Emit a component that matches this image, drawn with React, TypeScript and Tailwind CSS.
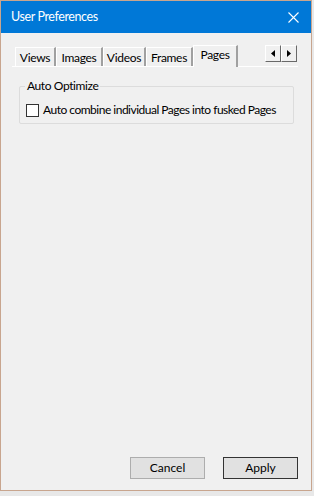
import React from "react";

const font = { fontFamily: 'Lato, "Noto Sans", sans-serif' };

function Tab({ label, selected, w }: { label: string; selected?: boolean; w: string }) {
  if (selected) {
    return (
      <div
        className={`relative ${w} h-[22px] -mb-[1px] bg-[#f0f0f0] border-t border-l border-white border-r-2 border-r-[#a0a0a0] flex items-start justify-center pt-[1px] z-10`}
      >
        <span className="text-[12px] leading-[16px] text-black tracking-[-0.3px]">{label}</span>
      </div>
    );
  }
  return (
    <div
      className={`${w} h-[19px] bg-[#f0f0f0] border-t border-l border-white border-r-2 border-r-[#a0a0a0] flex items-center justify-center mt-[3px]`}
    >
      <span className="text-[12px] leading-[16px] text-black mt-[1px] tracking-[-0.3px]">{label}</span>
    </div>
  );
}

function ArrowBtn({ dir }: { dir: "l" | "r" }) {
  return (
    <div className="w-[16px] h-[17px] bg-[#f0f0f0] border-t border-l border-white border-r border-b border-r-[#696969] border-b-[#696969] flex items-center justify-center">
      <svg width="4" height="7" viewBox="0 0 4 7">
        {dir === "l" ? <path d="M4 0 L0 3.5 L4 7 Z" fill="#000" /> : <path d="M0 0 L4 3.5 L0 7 Z" fill="#000" />}
      </svg>
    </div>
  );
}

export default function App() {
  return (
    <div className="w-[314px] h-[496px] bg-[#e8e8e8] relative overflow-hidden" style={font}>
      <div className="w-[312px] h-[491px] border border-[#c8a58e] bg-[#f0f0f0] flex flex-col">
        {/* Title bar */}
        <div className="h-[32px] bg-[#0078d7] flex items-center justify-between pl-[10px] pr-[12px]">
          <span className="text-white text-[12.5px] leading-none tracking-[-0.4px]">User Preferences</span>
          <svg width="11" height="11" viewBox="0 0 11 11">
            <path d="M0.5 0.5 L10.5 10.5 M10.5 0.5 L0.5 10.5" stroke="#ffffff" strokeWidth="1.1" />
          </svg>
        </div>
        {/* Body */}
        <div className="flex-1 flex flex-col pl-[11px] pr-[13px] pt-[11px]">
          <div className="relative flex items-end h-[23px] border-b border-white">
            <div className="flex items-end pl-[3px]">
              <Tab label="Views" w="w-[41px]" />
              <Tab label="Images" w="w-[47px]" />
              <Tab label="Videos" w="w-[43px]" />
              <Tab label="Frames" w="w-[47px]" />
              <Tab label="Pages" selected w="w-[45px]" />
            </div>
            <div className="absolute right-[1px] top-[1px] flex">
              <ArrowBtn dir="l" />
              <ArrowBtn dir="r" />
            </div>
          </div>
          <div className="pl-[7px] pr-[4px] pt-[19px]">
            <div className="relative border border-[#dcdcdc] rounded-[2px] h-[38px] pt-[15px] pl-[6px]">
              <span className="absolute -top-[9px] left-[5px] bg-[#f0f0f0] px-[2px] text-[12px] leading-[16px] text-black whitespace-nowrap tracking-[-0.4px]">
                Auto Optimize
              </span>
              <div className="flex items-center gap-[4px]">
                <div className="w-[13px] h-[13px] border border-[#333333] bg-white shrink-0" />
                <span className="text-[12px] leading-[16px] text-black whitespace-nowrap tracking-[-0.5px]">
                  Auto combine individual Pages into fusked Pages
                </span>
              </div>
            </div>
          </div>
          <div className="flex-1" />
          <div className="flex justify-end gap-[18px] pb-[11px] pr-[0px]">
            <div className="w-[75px] h-[22px] bg-[#e1e1e1] border border-[#adadad] flex items-center justify-center text-[12px] text-black">
              Cancel
            </div>
            <div className="w-[75px] h-[22px] bg-[#e1e1e1] border border-[#333333] flex items-center justify-center text-[12px] text-black">
              Apply
            </div>
          </div>
        </div>
      </div>
    </div>
  );
}
